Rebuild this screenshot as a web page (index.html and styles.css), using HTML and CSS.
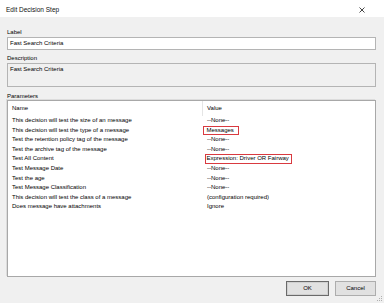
FILE: index.html
```html
<!DOCTYPE html>
<html>
<head>
<meta charset="utf-8">
<link rel="stylesheet" href="styles.css">
</head>
<body>
<div class="window">
  <div class="titlebar">
    <span class="title">Edit Decision Step</span>
    <svg class="close" width="6" height="6" viewBox="0 0 6 6"><path d="M0.5 0.5 L5.5 5.5 M5.5 0.5 L0.5 5.5" stroke="#333" stroke-width="0.9" fill="none"/></svg>
  </div>
  <div class="content">
    <div class="caption cap-label">Label</div>
    <div class="textbox">Fast Search Criteria</div>
    <div class="caption cap-desc">Description</div>
    <div class="textarea">Fast Search Criteria</div>
    <div class="caption cap-params">Parameters</div>
    <div class="list">
      <div class="list-head">
        <span class="c-name">Name</span>
        <span class="c-value head-value">Value</span>
      </div>
      <div class="row"><span class="c-name">This decision will test the size of an message</span><span class="c-value">--None--</span></div>
      <div class="row"><span class="c-name">This decision will test the type of a message</span><span class="c-value"><span class="hl hl-msg">Messages</span></span></div>
      <div class="row"><span class="c-name">Test the retention policy tag of the message</span><span class="c-value">--None--</span></div>
      <div class="row"><span class="c-name">Test the archive tag of the message</span><span class="c-value">--None--</span></div>
      <div class="row"><span class="c-name">Test All Content</span><span class="c-value"><span class="hl hl-expr">Expression: Driver OR Fairway</span></span></div>
      <div class="row"><span class="c-name">Test Message Date</span><span class="c-value">--None--</span></div>
      <div class="row"><span class="c-name">Test the age</span><span class="c-value">--None--</span></div>
      <div class="row"><span class="c-name">Test Message Classification</span><span class="c-value">--None--</span></div>
      <div class="row"><span class="c-name">This decision will test the class of a message</span><span class="c-value">(configuration required)</span></div>
      <div class="row"><span class="c-name">Does message have attachments</span><span class="c-value">Ignore</span></div>
    </div>
    <div class="buttons">
      <div class="btn btn-default">OK</div>
      <div class="btn">Cancel</div>
    </div>
  </div>
  <svg class="grip" width="6" height="6" viewBox="0 0 6 6">
    <rect x="4" y="0" width="1" height="1" fill="#b0b0b0"/>
    <rect x="2" y="2" width="1" height="1" fill="#b0b0b0"/>
    <rect x="4" y="2" width="1" height="1" fill="#b0b0b0"/>
    <rect x="0" y="4" width="1" height="1" fill="#b0b0b0"/>
    <rect x="2" y="4" width="1" height="1" fill="#b0b0b0"/>
    <rect x="4" y="4" width="1" height="1" fill="#b0b0b0"/>
  </svg>
</div>
</body>
</html>
```

FILE: styles.css
```css
html, body {
  margin: 0;
  padding: 0;
}
body {
  font-family: "Liberation Sans", Arial, sans-serif;
  font-size: 6px;
  color: #000000;
  background: #f0f0f0;
}
.window {
  position: relative;
  width: 384px;
  height: 303px;
  background: #f0f0f0;
  overflow: hidden;
}
.titlebar {
  height: 17px;
  background: #ffffff;
  display: flex;
  align-items: center;
  justify-content: space-between;
  padding: 0 19px 0 6px;
}
.title {
  font-size: 6.5px;
  color: #111;
  padding-top: 1px;
}
.close {
  display: block;
  margin-top: 3px;
}
.content {
  padding: 0 8px 0 7px;
  display: flex;
  flex-direction: column;
}
.caption {
  line-height: 8px;
  height: 8px;
}
.cap-label { margin-top: 11px; }
.cap-desc { margin-top: 4px; }
.cap-params { margin-top: 5px; }
.textbox {
  margin-top: 1px;
  height: 13px;
  box-sizing: border-box;
  background: #ffffff;
  border: 1px solid #b4b4b4;
  padding: 0 2px;
  line-height: 11px;
}
.textarea {
  margin-top: 1px;
  height: 24px;
  box-sizing: border-box;
  background: #f0f0f0;
  border: 1px solid #b4b4b4;
  padding: 1px 2px;
  line-height: 8px;
}
.list {
  height: 177px;
  box-sizing: border-box;
  background: #ffffff;
  border: 1px solid #a8a8a8;
  box-shadow: -1px -1px 0 #dcdcdc;
}
.list-head {
  display: flex;
  height: 15px;
  align-items: stretch;
  line-height: 15px;
}
.row {
  display: flex;
  height: 9.6px;
  line-height: 9.6px;
}
.c-name {
  width: 194px;
  box-sizing: border-box;
  padding-left: 4px;
  flex: none;
  white-space: nowrap;
}
.c-value {
  padding-left: 5px;
  white-space: nowrap;
}
.head-value {
  border-left: 1px solid #e5e5e5;
  padding-left: 4px;
}
.hl {
  display: inline-block;
  border: 1.5px solid #d93a40;
  line-height: 7px;
  height: 9.6px;
  box-sizing: border-box;
  vertical-align: top;
}
.hl-msg {
  margin-left: -4px;
  padding: 0 4px 0 2.5px;
}
.hl-expr {
  margin-left: -2px;
  padding: 0 2px 0 0.5px;
}
.buttons {
  display: flex;
  justify-content: flex-end;
  gap: 6px;
  margin-top: 4px;
}
.btn {
  width: 41px;
  height: 15px;
  box-sizing: border-box;
  border: 1px solid #adadad;
  background: #e1e1e1;
  text-align: center;
  line-height: 13px;
  font-size: 6px;
}
.btn-default {
  width: 43px;
  border: 1px solid #6a6a6a;
  box-shadow: inset 0 0 0 1px #d0d0d0;
}
.grip {
  position: absolute;
  right: 1px;
  bottom: 1px;
}
```
